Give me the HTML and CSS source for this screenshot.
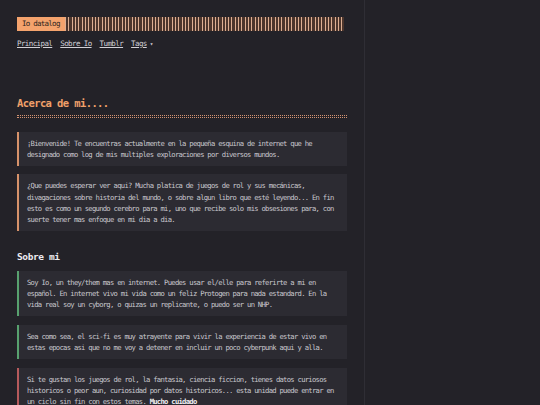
FILE: index.html
```html
<!DOCTYPE html>
<html lang="es">
<head>
<meta charset="utf-8">
<title>Io datalog</title>
<link rel="stylesheet" href="styles.css">
</head>
<body>
<div class="layout">
  <main class="main">
    <header class="header">
      <div class="brand-row">
        <div class="brand">Io datalog</div>
        <div class="stripes"></div>
      </div>
      <nav class="nav">
        <a href="#">Principal</a>
        <a href="#">Sobre Io</a>
        <a href="#">Tumblr</a>
        <a href="#">Tags</a><span class="caret">▾</span>
      </nav>
    </header>

    <h1 class="title">Acerca de mi....</h1>
    <div class="dots"></div>

    <div class="note orange">¡Bienvenide! Te encuentras actualmente en la pequeña esquina de internet que he designado como log de mis multiples exploraciones por diversos mundos.</div>
    <div class="note orange">¿Que puedes esperar ver aqui? Mucha platica de juegos de rol y sus mecánicas, divagaciones sobre historia del mundo, o sobre algun libro que esté leyendo... En fin esto es como un segundo cerebro para mi, uno que recibe solo mis obsesiones para, con suerte tener mas enfoque en mi dia a dia.</div>

    <h2 class="subtitle">Sobre mi</h2>

    <div class="note green">Soy Io, un they/them mas en internet. Puedes usar el/elle para referirte a mi en español. En internet vivo mi vida como un feliz Protogen para nada estandard. En la vida real soy un cyborg, o quizas un replicante, o puedo ser un NHP.</div>
    <div class="note green">Sea como sea, el sci-fi es muy atrayente para vivir la experiencia de estar vivo en estas epocas asi que no me voy a detener en incluir un poco cyberpunk aqui y alla.</div>
    <div class="note red">Si te gustan los juegos de rol, la fantasia, ciencia ficcion, tienes datos curiosos historicos o peor aun, curiosidad por datos historicos... esta unidad puede entrar en un ciclo sin fin con estos temas. <strong>Mucho cuidado</strong></div>
  </main>
  <aside class="side"></aside>
</div>
</body>
</html>
```
FILE: styles.css
```css
html, body {
  margin: 0;
  padding: 0;
  background: #232228;
  height: 100%;
  overflow: hidden;
}
body {
  font-family: "DejaVu Sans Mono", "Liberation Mono", monospace;
  color: #c9c8ce;
}
.layout {
  display: flex;
  min-height: 405px;
}
.main {
  width: 330px;
  padding: 17px 17px 0 17px;
  border-right: 1px solid #2f2e35;
}
.side {
  flex: 1;
}
.brand-row {
  display: flex;
  height: 14px;
  width: 327px;
}
.brand {
  background: #f4a36d;
  color: #2b2320;
  font-size: 7.5px;
  letter-spacing: -0.75px;
  line-height: 14px;
  padding: 0 5px;
  width: 38px;
  white-space: nowrap;
}
.stripes {
  flex: 1;
  background: repeating-linear-gradient(90deg, #dcae92 0 1px, #4b352c 1px 3.33px);
}
.nav {
  margin-top: 8px;
  display: flex;
  align-items: center;
  font-size: 7.5px;
  letter-spacing: -0.6px;
  line-height: 10px;
}
.nav a {
  color: #d2d1d7;
  text-decoration: underline;
  text-underline-offset: 1px;
  margin-right: 8px;
}
.nav a:last-of-type {
  margin-right: 3px;
}
.caret {
  font-size: 6px;
  color: #d2d1d7;
}
.title {
  margin: 48px 0 0 0;
  color: #f0a06a;
  font-size: 10.5px;
  letter-spacing: -0.6px;
  font-weight: bold;
  line-height: 12px;
}
.dots {
  margin-top: 6px;
  height: 1px;
  border-top: 1px dotted #d39271;
  border-bottom: 1px dotted #d39271;
}
.note {
  background: #2c2b32;
  font-size: 7.2px;
  letter-spacing: -0.72px;
  line-height: 11.2px;
  padding: 6px 8px 6px 8px;
  border-left: 2px solid #d6926a;
  margin-top: 8.5px;
}
.dots + .note {
  margin-top: 13.5px;
}
.note.green {
  border-left-color: #58a16f;
}
.note.red {
  border-left-color: #b65a5c;
}
.note strong {
  color: #f1f0f4;
}
.subtitle {
  margin: 20px 0 0 0;
  color: #ecebf0;
  font-size: 9.5px;
  letter-spacing: -0.4px;
  line-height: 12px;
  font-weight: bold;
}
.subtitle + .note {
  margin-top: 7.5px;
}
```
